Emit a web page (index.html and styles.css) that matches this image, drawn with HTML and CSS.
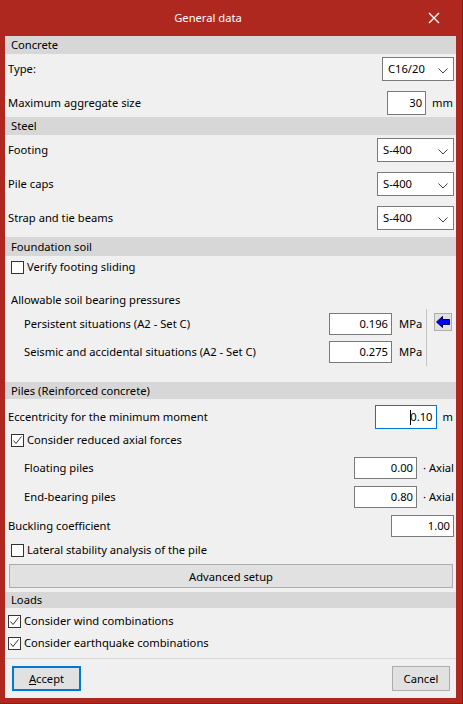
FILE: index.html
```html
<!DOCTYPE html>
<html>
<head>
<meta charset="utf-8">
<link rel="stylesheet" href="styles.css">
</head>
<body>
<div class="win">
  <div class="titlebar">
    <div class="title">General data</div>
    <div class="close">
      <svg width="12" height="12" viewBox="0 0 12 12"><path d="M1 1 L11 11 M11 1 L1 11" stroke="#fff" stroke-width="1.4" fill="none"/></svg>
    </div>
  </div>
  <div class="body">
    <div class="sec h18">Concrete</div>
    <div class="row mt3">
      <span class="lbl">Type:</span>
      <div class="sel w72">C16/20<svg class="chev" width="10" height="6" viewBox="0 0 10 6"><path d="M0.5 0.5 L5 5 L9.5 0.5" stroke="#444" stroke-width="1" fill="none"/></svg></div>
    </div>
    <div class="row mt10 pr3">
      <span class="lbl">Maximum aggregate size</span>
      <div class="inp w39 h24">30</div>
      <span class="unit ml6">mm</span>
    </div>

    <div class="sec h18 mt2">Steel</div>
    <div class="row mt3">
      <span class="lbl">Footing</span>
      <div class="sel w77">S-400<svg class="chev" width="10" height="6" viewBox="0 0 10 6"><path d="M0.5 0.5 L5 5 L9.5 0.5" stroke="#444" stroke-width="1" fill="none"/></svg></div>
    </div>
    <div class="row mt10">
      <span class="lbl">Pile caps</span>
      <div class="sel w77">S-400<svg class="chev" width="10" height="6" viewBox="0 0 10 6"><path d="M0.5 0.5 L5 5 L9.5 0.5" stroke="#444" stroke-width="1" fill="none"/></svg></div>
    </div>
    <div class="row mt10">
      <span class="lbl">Strap and tie beams</span>
      <div class="sel w77">S-400<svg class="chev" width="10" height="6" viewBox="0 0 10 6"><path d="M0.5 0.5 L5 5 L9.5 0.5" stroke="#444" stroke-width="1" fill="none"/></svg></div>
    </div>

    <div class="sec h19 mt7">Foundation soil</div>
    <div class="row crow mt4 pl6">
      <span class="cb"></span><span class="cblbl">Verify footing sliding</span>
    </div>
    <div class="row crow mt19 pl6">
      <span class="lbl">Allowable soil bearing pressures</span>
    </div>
    <div class="pgroup">
      <div class="pcol">
        <div class="row h22">
          <span class="lbl">Persistent situations (A2 - Set C)</span>
          <div class="inp w63 h22">0.196</div>
          <span class="unit ml7 wmpa">MPa</span>
        </div>
        <div class="row h22 mt6">
          <span class="lbl">Seismic and accidental situations (A2 - Set C)</span>
          <div class="inp w63 h22">0.275</div>
          <span class="unit ml7 wmpa">MPa</span>
        </div>
      </div>
      <div class="vsep"></div>
      <div class="arrowcol">
        <div class="arrowbtn">
          <svg width="14" height="12" viewBox="0 0 14 12"><path d="M0.5 6 L6.5 0.5 L6.5 3.5 L13.5 3.5 L13.5 8.5 L6.5 8.5 L6.5 11.5 Z" fill="#0000ff" stroke="#00005a" stroke-width="1" stroke-linejoin="miter"/></svg>
        </div>
      </div>
    </div>

    <div class="sec h17 mt16">Piles (Reinforced concrete)</div>
    <div class="row mt6 pr3">
      <span class="lbl">Eccentricity for the minimum moment</span>
      <div class="inp w62 h24 focus"><span class="caret"></span>0.10</div>
      <span class="unit ml6">m</span>
    </div>
    <div class="row crow mt4 pl6">
      <span class="cb checked"><svg width="11" height="11" viewBox="0 0 11 11"><path d="M1.5 5.5 L4 8.5 L9.5 1.5" stroke="#333" stroke-width="1" fill="none"/></svg></span><span class="cblbl">Consider reduced axial forces</span>
    </div>
    <div class="row h22 mt10 pl19 pr2">
      <span class="lbl">Floating piles</span>
      <div class="inp w63 h22">0.00</div>
      <span class="unit ml6">· Axial</span>
    </div>
    <div class="row h22 mt7 pl19 pr2">
      <span class="lbl">End-bearing piles</span>
      <div class="inp w63 h22">0.80</div>
      <span class="unit ml6">· Axial</span>
    </div>
    <div class="row h22 mt7 pr2">
      <span class="lbl">Buckling coefficient</span>
      <div class="inp w63 h22">1.00</div>
    </div>
    <div class="row crow mt6 pl6">
      <span class="cb"></span><span class="cblbl">Lateral stability analysis of the pile</span>
    </div>
    <div class="advbtn">Advanced setup</div>

    <div class="sec h16 mt4">Loads</div>
    <div class="row crow mt6 pl3">
      <span class="cb checked"><svg width="11" height="11" viewBox="0 0 11 11"><path d="M1.5 5.5 L4 8.5 L9.5 1.5" stroke="#333" stroke-width="1" fill="none"/></svg></span><span class="cblbl">Consider wind combinations</span>
    </div>
    <div class="row crow mt8 pl3">
      <span class="cb checked"><svg width="11" height="11" viewBox="0 0 11 11"><path d="M1.5 5.5 L4 8.5 L9.5 1.5" stroke="#333" stroke-width="1" fill="none"/></svg></span><span class="cblbl">Consider earthquake combinations</span>
    </div>
  </div>
  <div class="footer">
    <div class="btn accept"><span class="ul">A</span>ccept</div>
    <div class="btn cancel">Cancel</div>
  </div>
</div>
</body>
</html>
```
FILE: styles.css
```css
* { box-sizing: border-box; }
html, body { margin: 0; padding: 0; }
body {
  width: 463px;
  height: 704px;
  font-family: "Noto Sans", "Segoe UI", sans-serif;
  font-size: 11.2px;
  color: #000;
  background: #ae2820;
}
.win {
  width: 463px;
  height: 704px;
  display: flex;
  flex-direction: column;
  padding: 0 6px 5px 5px;
  background: #ae2820;
  border-right: 1px solid #8e1c15;
  border-bottom: 1px solid #8e1c15;
}
.titlebar {
  height: 36px;
  display: flex;
  align-items: center;
  color: #fff;
  flex: none;
}
.title {
  flex: 1;
  text-align: center;
  padding-left: 1px;
  margin-top: -1px;
}
.close {
  width: 46px;
  display: flex;
  justify-content: center;
  padding-left: 2px;
  margin-top: -1px;
}
.body {
  flex: 1;
  background: #f0f0f0;
  display: flex;
  flex-direction: column;
}
.sec {
  background: #d7d7d7;
  padding-left: 6px;
  display: flex;
  align-items: center;
  line-height: 1;
}
.h16 { height: 16px; }
.h17 { height: 17px; }
.h18 { height: 18px; }
.h19 { height: 19px; }
.h22 { height: 22px; }
.h24 { height: 24px; }
.row {
  display: flex;
  align-items: center;
  padding-left: 3px;
  padding-right: 2px;
  line-height: 1;
}
.crow { height: 14px; }
.pl3 { padding-left: 3px; }
.pl6 { padding-left: 6px; }
.pl19 { padding-left: 19px; }
.pr2 { padding-right: 2px; }
.pr3 { padding-right: 3px; }
.mt2 { margin-top: 2px; }
.mt3 { margin-top: 3px; }
.mt4 { margin-top: 4px; }
.mt6 { margin-top: 6px; }
.mt7 { margin-top: 7px; }
.mt8 { margin-top: 8px; }
.mt10 { margin-top: 10px; }
.mt16 { margin-top: 16px; }
.mt19 { margin-top: 19px; }
.ml6 { margin-left: 6px; }
.ml7 { margin-left: 7px; }
.lbl { flex: 1; white-space: nowrap; }
.sel {
  height: 24px;
  background: #fff;
  border: 1px solid #7a7a7a;
  display: flex;
  align-items: center;
  padding-left: 5px;
  position: relative;
}
.chev { position: absolute; right: 5px; top: 10px; }
.w39 { width: 39px; }
.w62 { width: 62px; }
.w63 { width: 63px; }
.w72 { width: 72px; }
.w77 { width: 77px; }
.inp {
  background: #fff;
  border: 1px solid #7a7a7a;
  display: flex;
  align-items: center;
  justify-content: flex-end;
  padding-right: 3px;
}
.inp.focus { border-color: #0078d7; }
.caret {
  width: 1px;
  height: 15px;
  background: #000;
  margin-right: -1px;
  position: relative;
  z-index: 1;
}
.unit { white-space: nowrap; }
.wmpa { width: 23px; }
.pgroup {
  display: flex;
  margin-top: 2px;
  height: 57px;
}
.pcol {
  flex: 1;
  padding-top: 4px;
}
.pcol .row { padding-left: 19px; padding-right: 0; }
.vsep {
  width: 1px;
  margin-left: 4px;
  background: #c4c4c4;
}
.arrowcol {
  width: 29px;
  padding-left: 7px;
  padding-top: 4px;
}
.arrowbtn {
  width: 18px;
  height: 18px;
  background: #e1e1e1;
  border: 1px solid #adadad;
  display: flex;
  align-items: center;
  justify-content: center;
}
.cb {
  width: 13px;
  height: 13px;
  border: 1px solid #333;
  background: #fff;
  display: flex;
  align-items: center;
  justify-content: center;
  flex: none;
}
.cblbl { margin-left: 3px; white-space: nowrap; }
.advbtn {
  margin: 7px 3px 0 4px;
  height: 24px;
  background: #e1e1e1;
  border: 1px solid #adadad;
  display: flex;
  align-items: center;
  justify-content: center;
}
.footer {
  flex: none;
  height: 40px;
  background: #f0f0f0;
  border-top: 1px solid #d8d8d8;
  display: flex;
  justify-content: space-between;
  align-items: flex-start;
  padding: 7px 6px 0 7px;
}
.btn {
  height: 25px;
  background: #e1e1e1;
  border: 1px solid #adadad;
  display: flex;
  align-items: center;
  justify-content: center;
}
.accept { width: 69px; border: 2px solid #0078d7; }
.cancel { width: 58px; }
.ul { text-decoration: underline; }
```
